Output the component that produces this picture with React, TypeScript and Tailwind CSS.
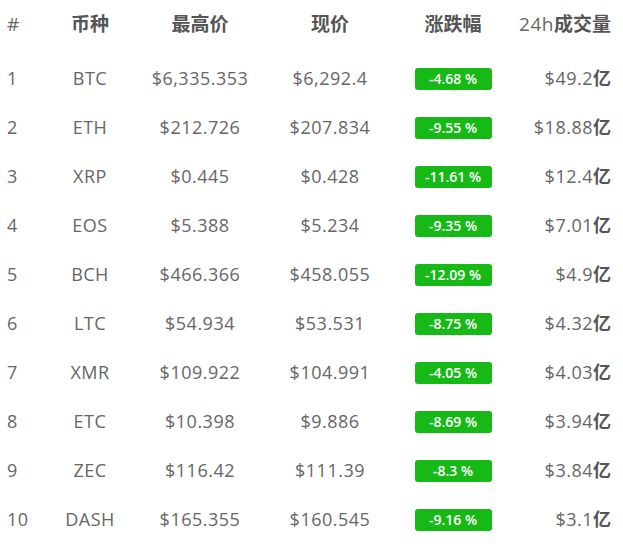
const rows = [
  ["1", "BTC", "$6,335.353", "$6,292.4", "-4.68 %", "$49.2"],
  ["2", "ETH", "$212.726", "$207.834", "-9.55 %", "$18.88"],
  ["3", "XRP", "$0.445", "$0.428", "-11.61 %", "$12.4"],
  ["4", "EOS", "$5.388", "$5.234", "-9.35 %", "$7.01"],
  ["5", "BCH", "$466.366", "$458.055", "-12.09 %", "$4.9"],
  ["6", "LTC", "$54.934", "$53.531", "-8.75 %", "$4.32"],
  ["7", "XMR", "$109.922", "$104.991", "-4.05 %", "$4.03"],
  ["8", "ETC", "$10.398", "$9.886", "-8.69 %", "$3.94"],
  ["9", "ZEC", "$116.42", "$111.39", "-8.3 %", "$3.84"],
  ["10", "DASH", "$165.355", "$160.545", "-9.16 %", "$3.1"],
];

const font = {
  fontFamily: '"Open Sans", "Noto Sans CJK SC", sans-serif',
};

export default function App() {
  return (
    <div className="w-[623px] h-[546px] bg-white text-[#555]" style={font}>
      <div className="flex items-center h-[49px] text-[19px]">
        <div className="w-[50px] pl-[7px] text-[#666]">#</div>
        <div className="w-[80px] text-center font-bold">币种</div>
        <div className="w-[140px] text-center font-bold">最高价</div>
        <div className="w-[120px] text-center font-bold">现价</div>
        <div className="w-[126px] text-center font-bold">涨跌幅</div>
        <div className="flex-1 text-right pr-[12px] text-[#666] tracking-[0.5px]">
          24h<span className="font-bold text-[#555] tracking-normal">成交量</span>
        </div>
      </div>
      <div className="mt-[5px]">
        {rows.map((r) => (
          <div key={r[0]} className="flex items-center h-[49px] text-[18px] tracking-[0.5px] text-[#666]">
            <div className="w-[50px] pl-[7px]">{r[0]}</div>
            <div className="w-[80px] text-center">{r[1]}</div>
            <div className="w-[140px] text-center">{r[2]}</div>
            <div className="w-[120px] text-center">{r[3]}</div>
            <div className="w-[126px] flex justify-center">
              <span className="w-[77px] h-[22px] rounded-[3px] bg-[#17b917] text-white text-[14px] font-semibold tracking-normal flex items-center justify-center">
                {r[4]}
              </span>
            </div>
            <div className="flex-1 text-right pr-[12px]">
              {r[5]}
              <span className="font-bold text-[#555] tracking-normal">亿</span>
            </div>
          </div>
        ))}
      </div>
    </div>
  );
}
